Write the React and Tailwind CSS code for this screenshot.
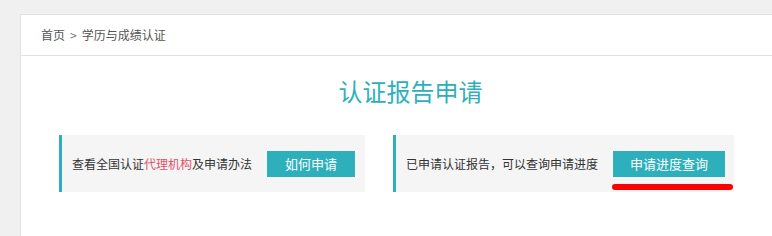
import React from 'react';

const FONT = { fontFamily: '"Noto Sans CJK SC", "Noto Sans", sans-serif' };

const App = () => {
    return (
        <div className="h-[236px] w-[772px] overflow-hidden bg-[#f0f0f0] pt-[14px] pl-[20px]" style={FONT}>
            <div className="h-full bg-white border-t border-l border-[#e2e2e2]">
                <div className="h-[41px] border-b border-[#e2e2e2] flex items-center pl-[20px] text-[12px] text-[#555]">
                    <span>首页</span>
                    <span className="mx-[5px] text-[#777]">&gt;</span>
                    <span>学历与成绩认证</span>
                </div>

                <h1 className="mt-[19px] h-[32px] leading-[32px] text-center text-[24px] text-[#2eb0bc] pl-[38px] pr-[10px]">认证报告申请</h1>

                <div className="mt-[28px] ml-[38px] flex gap-[28px]">
                    <div className="w-[306px] h-[57px] bg-[#f5f5f5] border-l-[3px] border-[#2eb0bc] flex items-center justify-between pl-[10px] pr-[10px]">
                        <p className="text-[12px] text-[#333]">
                            查看全国认证<span className="text-[#e0506a]">代理机构</span>及申请办法
                        </p>
                        <button className="w-[88px] h-[26px] bg-[#2eb0bc] text-white text-[13px]">如何申请</button>
                    </div>

                    <div className="relative w-[341px] h-[57px] bg-[#f5f5f5] border-l-[3px] border-[#2eb0bc] flex items-center justify-between pl-[10px] pr-[9px]">
                        <p className="text-[12px] text-[#333]">已申请认证报告，可以查询申请进度</p>
                        <button className="w-[112px] h-[26px] bg-[#2eb0bc] text-white text-[13px]">申请进度查询</button>
                        <span className="absolute left-[216px] top-[49px] w-[121px] h-[6px] rounded-full bg-[#ff0000]"></span>
                    </div>
                </div>
            </div>
        </div>
    );
};

export default App;
